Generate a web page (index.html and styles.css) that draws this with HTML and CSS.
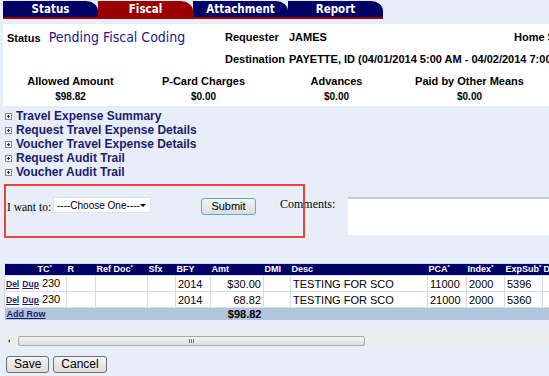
FILE: index.html
```html
<!DOCTYPE html>
<html>
<head>
<meta charset="utf-8">
<link rel="stylesheet" href="styles.css">
</head>
<body>
<div class="tabs">
  <div class="tab navy">Status</div>
  <div class="tab red">Fiscal</div>
  <div class="tab navy">Attachment</div>
  <div class="tab navy">Report</div>
</div>

<div class="summary">
  <div class="line">
    <div class="cell"><span class="lbl">Status</span><span class="status-val">Pending Fiscal Coding</span></div>
    <div class="cell lbl">Requester</div>
    <div class="cell val">JAMES</div>
    <div class="cell lbl home">Home Station</div>
  </div>
  <div class="line">
    <div class="cell"></div>
    <div class="cell lbl">Destination</div>
    <div class="cell val dest">PAYETTE, ID (04/01/2014 5:00 AM - 04/02/2014 7:00 PM)</div>
  </div>
  <div class="amounts">
    <div class="amt"><div class="al">Allowed Amount</div><div class="av">$98.82</div></div>
    <div class="amt"><div class="al">P-Card Charges</div><div class="av">$0.00</div></div>
    <div class="amt"><div class="al">Advances</div><div class="av">$0.00</div></div>
    <div class="amt"><div class="al">Paid by Other Means</div><div class="av">$0.00</div></div>
  </div>
</div>

<ul class="expanders">
  <li><span class="plus"></span>Travel Expense Summary</li>
  <li><span class="plus"></span>Request Travel Expense Details</li>
  <li><span class="plus"></span>Voucher Travel Expense Details</li>
  <li><span class="plus"></span>Request Audit Trail</li>
  <li><span class="plus"></span>Voucher Audit Trail</li>
</ul>

<div class="action">
  <span class="want">I want to:</span>
  <span class="select-wrap"><select class="choose"><option>----Choose One----</option></select></span>
  <button class="btn submit">Submit</button>
  <span class="comments-lbl">Comments:</span>
  <textarea class="comments"></textarea>
  <div class="highlight"></div>
</div>

<div class="grid-wrap">
  <table class="grid">
    <colgroup>
      <col class="c-link"><col class="c-tc"><col class="c-r"><col class="c-ref"><col class="c-sfx"><col class="c-bfy"><col class="c-amt"><col class="c-dmi"><col class="c-desc"><col class="c-pca"><col class="c-idx"><col class="c-exp"><col class="c-more">
    </colgroup>
    <thead>
      <tr><th></th><th>TC<span class="req">*</span></th><th>R</th><th>Ref Doc<span class="req">*</span></th><th>Sfx</th><th>BFY</th><th>Amt</th><th>DMI</th><th>Desc</th><th>PCA<span class="req">*</span></th><th>Index<span class="req">*</span></th><th>ExpSub<span class="req">*</span></th><th>DMI</th></tr>
    </thead>
    <tbody>
      <tr><td class="links" colspan="2"><a href="#">Del</a> <a href="#">Dup</a> 230</td><td></td><td></td><td></td><td>2014</td><td class="num">$30.00</td><td></td><td>TESTING FOR SCO</td><td>11000</td><td>2000</td><td>5396</td><td></td></tr>
      <tr><td class="links" colspan="2"><a href="#">Del</a> <a href="#">Dup</a> 230</td><td></td><td></td><td></td><td>2014</td><td class="num">68.82</td><td></td><td>TESTING FOR SCO</td><td>21000</td><td>2000</td><td>5360</td><td></td></tr>
    </tbody>
    <tfoot>
      <tr><td colspan="6"><a href="#">Add Row</a></td><td class="num total">$98.82</td><td colspan="6"></td></tr>
    </tfoot>
  </table>
</div>

<div class="hscroll">
  <span class="arrow"></span>
  <div class="thumb"><span class="grip"></span></div>
</div>

<div class="buttons">
  <button class="btn">Save</button>
  <button class="btn">Cancel</button>
</div>
</body>
</html>
```

FILE: styles.css
```css
html, body {
  margin: 0;
  padding: 0;
}
body {
  width: 549px;
  height: 376px;
  overflow: hidden;
  background: #e7eef8;
  font-family: "Liberation Sans", Arial, sans-serif;
  color: #000;
}

/* tabs */
.tabs {
  display: flex;
  padding: 1px 0 0 3px;
  height: 19px;
}
.tab {
  width: 95px;
  height: 16px;
  border-bottom: 2px solid #a00000;
  border-top-right-radius: 12px 10px;
  color: #fff;
  font-family: "DejaVu Sans Condensed", "DejaVu Sans", sans-serif;
  font-weight: bold;
  font-size: 11.5px;
  line-height: 17px;
  text-align: center;
}
.tab.navy { background: #000066; }
.tab.red { background: #9b0000; }

/* summary */
.summary {
  margin: 4px 0 0 3px;
  background: #fff;
  padding-top: 2px;
  height: 80px;
  white-space: nowrap;
  overflow: hidden;
}
.line {
  display: grid;
  grid-template-columns: 218px 64px 225px auto;
  height: 22px;
  line-height: 22px;
  padding-left: 4px;
  font-size: 11px;
}
.line .dest { grid-column: 3 / span 2; }
.lbl { font-weight: bold; }
.val { font-weight: bold; }
.status-val {
  margin-left: 8px;
  color: #1a1a8c;
  font-family: "DejaVu Sans Condensed", "DejaVu Sans", sans-serif;
  font-size: 14px;
}
.amounts {
  display: grid;
  grid-template-columns: repeat(4, 133px);
  margin-top: 3px;
  padding-left: 1px;
  font-weight: bold;
  text-align: center;
}
.al { font-size: 11px; line-height: 16px; }
.av { font-size: 10px; line-height: 16px; }

/* expanders */
.expanders {
  list-style: none;
  margin: 3px 0 0;
  padding: 0 0 0 5px;
}
.expanders li {
  display: flex;
  align-items: center;
  height: 14px;
  font-size: 12px;
  font-weight: bold;
  color: #1c1c6e;
}
.plus {
  position: relative;
  width: 7px;
  height: 7px;
  margin-right: 4px;
  border: 1px solid #8a8a8a;
  background: #f4f4f4;
  box-sizing: border-box;
}
.plus::before, .plus::after {
  content: "";
  position: absolute;
  background: #333;
}
.plus::before { left: 1px; top: 2px; width: 3px; height: 1px; }
.plus::after { left: 2px; top: 1px; width: 1px; height: 3px; }

/* action row */
.action {
  position: relative;
  box-sizing: border-box;
  display: flex;
  align-items: flex-start;
  height: 84px;
  padding: 18px 0 0 7px;
  font-family: "Liberation Serif", "Times New Roman", serif;
  font-size: 12px;
  white-space: nowrap;
}
.action > * { flex: none; }
.want { width: 46px; font-size: 11.5px; line-height: 18px; margin-top: 1px; }
.choose {
  appearance: none;
  -webkit-appearance: none;
  display: block;
  width: 98px;
  height: 16px;
  padding: 0 0 0 3px;
  border: 1px solid #e2e2e2;
  border-radius: 0;
  background: #fff;
  font-family: "Liberation Sans", Arial, sans-serif;
  font-size: 10px;
  color: #000;
}
.select-wrap { position: relative; }
.select-wrap::after {
  content: "";
  position: absolute;
  right: 5px;
  top: 7px;
  border-left: 3.5px solid transparent;
  border-right: 3.5px solid transparent;
  border-top: 3.5px solid #000;
}
.btn {
  height: 17px;
  padding: 0 7px;
  border: 1px solid #707070;
  border-radius: 3px;
  background: linear-gradient(#f4f4f4, #dcdcdc);
  font-family: "Liberation Sans", Arial, sans-serif;
  font-size: 11px;
  line-height: 15px;
  color: #000;
}
.btn.submit {
  width: 55px;
  margin: 1px 0 0 50px;
  border-color: #5aa8e0;
}
.comments-lbl {
  width: 68px;
  margin-left: 24px;
  line-height: 14px;
}
.comments {
  width: 201px;
  height: 38px;
  margin: 0;
  padding: 0;
  border: none;
  border-top: 2px solid #c6cad3;
  background: #fff;
  resize: none;
  box-sizing: border-box;
}
.highlight {
  position: absolute;
  left: 4px;
  top: 5px;
  width: 297px;
  height: 50px;
  border: 2px solid #e8453e;
}

/* grid */
.grid-wrap {
  margin: 0 0 0 4px;
  overflow: hidden;
}
.grid {
  table-layout: fixed;
  width: 598px;
  border-collapse: collapse;
  font-size: 11px;
}
.c-link { width: 32px; }
.c-tc { width: 30px; }
.c-r { width: 29px; }
.c-ref { width: 52px; }
.c-sfx { width: 28px; }
.c-bfy { width: 35px; }
.c-amt { width: 53px; }
.c-dmi { width: 27px; }
.c-desc { width: 137px; }
.c-pca { width: 39px; }
.c-idx { width: 38px; }
.c-exp { width: 38px; }
.c-more { width: 60px; }
.grid th {
  height: 11px;
  padding: 0 0 0 1px;
  background: #000066;
  color: #fff;
  font-size: 9px;
  font-weight: bold;
  text-align: left;
  line-height: 11px;
  white-space: nowrap;
  overflow: hidden;
  border-top: 1px solid #d0d8e6;
}
.req { font-size: 6px; line-height: 0; vertical-align: 3px; }
.grid tbody td {
  height: 14px;
  padding: 0 0 0 2px;
  background: #fff;
  border: 1px solid #d6dce6;
  line-height: 14px;
  white-space: nowrap;
  overflow: hidden;
}
.grid td.num { text-align: right; padding: 0 2px 0 0; }
.grid td.links { padding-left: 1px; }
.grid td a {
  color: #1c1c6e;
  font-weight: bold;
  font-size: 8.5px;
}
.grid tfoot td {
  height: 12px;
  padding: 0 0 0 2px;
  background: #b2c5dd;
  line-height: 11px;
  font-size: 10px;
  white-space: nowrap;
}
.grid tfoot td a { font-size: 9px; }
.grid tfoot td.total { font-weight: bold; font-size: 11px; }

/* horizontal scrollbar */
.hscroll {
  display: flex;
  align-items: center;
  margin: 15px 0 0 5px;
  height: 12px;
  background: #eeeeee;
}
.arrow {
  width: 13px;
  height: 12px;
  position: relative;
}
.arrow::after {
  content: "";
  position: absolute;
  left: 3px;
  top: 4px;
  border-top: 2px solid transparent;
  border-bottom: 2px solid transparent;
  border-right: 2px solid #555;
}
.thumb {
  display: flex;
  align-items: center;
  justify-content: center;
  width: 347px;
  height: 10px;
  box-sizing: border-box;
  border: 1px solid #a8a8a8;
  border-radius: 2px;
  background: linear-gradient(#f3f3f3, #dcdcdc);
}
.grip {
  width: 5px;
  height: 4px;
  background: repeating-linear-gradient(90deg, #777 0 1px, transparent 1px 2px);
}

.buttons {
  display: flex;
  gap: 4px;
  margin: 9px 0 0 6px;
}
.buttons .btn { height: 17px; padding: 0 7px; font-size: 12px; }
```
